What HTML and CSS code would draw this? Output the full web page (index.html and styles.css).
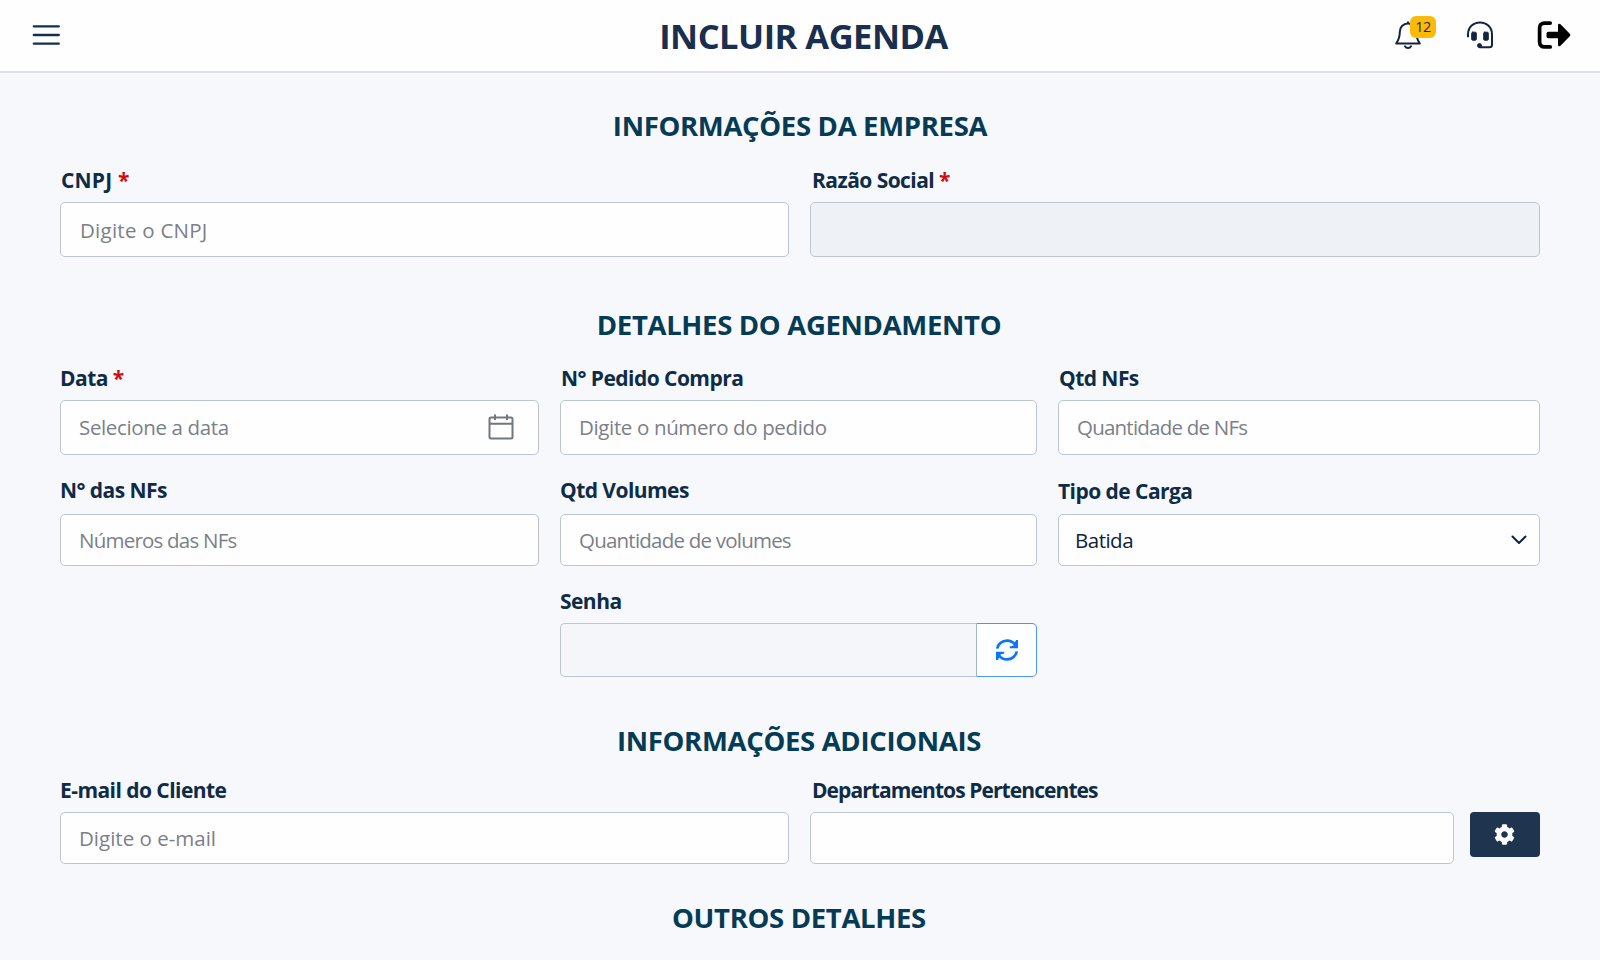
FILE: index.html
```html
<!DOCTYPE html>
<html lang="pt-BR">
  <head>
    <meta charset="UTF-8" />
    <title>Incluir Agenda</title>
    <link rel="stylesheet" href="styles.css">
  </head>
  <body>
    <header class="topbar">
      <button type="button" class="icon-btn menu-btn" aria-label="Menu">
        <svg width="28" height="22" viewBox="0 0 28 22" stroke="currentColor" stroke-width="2.3" stroke-linecap="round">
          <path d="M1.8 2.3h25M1.8 11h25M1.8 19.7h25" />
        </svg>
      </button>
      <h1>INCLUIR AGENDA</h1>
      <div class="actions">
        <button type="button" class="icon-btn bell-btn" aria-label="Notificações">
          <svg width="26" height="28" viewBox="0 0 26 28" fill="none" stroke="currentColor" stroke-width="2" stroke-linejoin="round" stroke-linecap="round">
            <path d="M13 2.6c-5 0-8.2 3.6-8.2 8.4 0 6-1.500 8.500-3.600 11.500h23.600C22.700 19.500 21.200 17 21.200 11c0-4.800-3.200-8.400-8.200-8.400zM13 2.500V1.300" />
            <path d="M10 25.300c.6 1.100 1.700 1.700 3 1.700s2.400-.6 3-1.700" />
          </svg>
          <span class="badge">12</span>
        </button>
        <button type="button" class="icon-btn" aria-label="Suporte">
          <svg width="28" height="28" viewBox="0 0 28 28" fill="none" stroke="currentColor" stroke-width="2" stroke-linecap="round">
            <path d="M2 15.500v-2.300C2 6.500 7.200 1.500 14 1.500s12 5 12 11.700v10.500c0 1.600-1 2.600-2.600 2.600H14" />
            <rect x="5.700" y="11.200" width="4.600" height="8" rx="1" fill="currentColor" stroke-width="1" />
            <rect x="17.700" y="11.200" width="4.600" height="8" rx="1" fill="currentColor" stroke-width="1" />
            <circle cx="13.500" cy="24.600" r="2" fill="currentColor" stroke-width="1" />
          </svg>
        </button>
        <button type="button" class="icon-btn logout-btn" aria-label="Sair">
          <svg width="34" height="28" viewBox="0 0 34 28">
            <path d="M13.200 2.100H7.500c-3 0-4.900 1.900-4.900 4.900v14c0 3 1.900 4.900 4.900 4.900h5.700" fill="none" stroke="currentColor" stroke-width="3.700" stroke-linecap="round" />
            <path d="M11.500 10.800h9.500V4.200c0-1.500 1.500-2 2.500-1l9.300 9.600c.7.700.7 1.700 0 2.400l-9.300 9.600c-1 1-2.500.5-2.500-1v-6.600h-9.500c-1.200 0-2-.8-2-2v-2.400c0-1.200.8-2 2-2z" fill="currentColor" />
          </svg>
        </button>
      </div>
    </header>

    <main>
      <form>
        <h2>INFORMAÇÕES DA EMPRESA</h2>
        <div class="row row-2 row-empresa">
          <div class="field">
            <label for="cnpj" class="label-cnpj">CNPJ <span class="required">*</span></label>
            <input type="text" id="cnpj" class="control" placeholder="Digite o CNPJ" />
          </div>
          <div class="field">
            <label for="razao">Razão Social <span class="required">*</span></label>
            <input type="text" id="razao" class="control" readonly />
          </div>
        </div>

        <h2 class="titulo-detalhes">DETALHES DO AGENDAMENTO</h2>
        <div class="row row-3 row-data">
          <div class="field">
            <label for="data">Data <span class="required">*</span></label>
            <div class="control date-control">
              <input type="text" id="data" placeholder="Selecione a data" />
              <svg width="26" height="26" viewBox="0 0 26 26" fill="none" stroke="currentColor" stroke-width="2">
                <rect x="1.500" y="3.500" width="23" height="21" rx="1.500" />
                <path d="M1.500 9.800h23M7 .5v5.500M19 .5v5.500" />
              </svg>
            </div>
          </div>
          <div class="field">
            <label for="pedido" class="label-pedido">N° Pedido Compra</label>
            <input type="text" id="pedido" class="control" placeholder="Digite o número do pedido" />
          </div>
          <div class="field">
            <label for="qtd_nfs" class="label-pedido">Qtd NFs</label>
            <input type="text" id="qtd_nfs" class="control compact" placeholder="Quantidade de NFs" />
          </div>
        </div>

        <div class="row row-3 row-nfs">
          <div class="field">
            <label for="nfs">N° das NFs</label>
            <input type="text" id="nfs" class="control compact" placeholder="Números das NFs" />
          </div>
          <div class="field">
            <label for="volumes">Qtd Volumes</label>
            <input type="text" id="volumes" class="control compact" placeholder="Quantidade de volumes" />
          </div>
          <div class="field">
            <label for="carga">Tipo de Carga</label>
            <div class="control select-control">
              <select id="carga">
                <option>Batida</option>
                <option>Paletizada</option>
              </select>
              <svg width="16" height="10" viewBox="0 0 16 10" fill="none" stroke="currentColor" stroke-width="2" stroke-linecap="round" stroke-linejoin="round">
                <path d="M1.500 1.500L8 8l6.500-6.500" />
              </svg>
            </div>
          </div>
        </div>

        <div class="row row-3 row-senha">
          <div class="field senha">
            <label for="senha">Senha</label>
            <div class="input-group">
              <input type="text" id="senha" class="control" readonly />
              <button type="button" class="refresh-btn" aria-label="Gerar senha">
                <svg width="24" height="24" viewBox="0 0 24 24">
                  <path d="M2.200 10.600C3 6 7 2.600 12 2.600c3.500 0 6.300 1.500 8.200 4.200M21.800 13.400c-.8 4.600-4.800 8-9.800 8-3.500 0-6.300-1.500-8.200-4.200" fill="none" stroke="currentColor" stroke-width="2.600" />
                  <path d="M23 2v8.300h-8.200V8.500l3.700-1L21 2zM1 22v-8.300h8.200v1.800l-3.700 1L3 22z" fill="currentColor" />
                </svg>
              </button>
            </div>
          </div>
        </div>

        <h2 class="titulo-adicionais">INFORMAÇÕES ADICIONAIS</h2>
        <div class="row row-2 row-adicionais">
          <div class="field">
            <label for="email">E-mail do Cliente</label>
            <input type="email" id="email" class="control" placeholder="Digite o e-mail" />
          </div>
          <div class="field">
            <label for="departamentos" class="label-departamentos">Departamentos Pertencentes</label>
            <div class="with-button">
              <input type="text" id="departamentos" class="control" />
              <button type="button" class="config-btn" aria-label="Configurar">
                <svg width="21" height="21" viewBox="0 0 512 512" fill="currentColor">
                  <path d="M487.400 315.700l-42.600-24.600c4.300-23.200 4.300-47 0-70.200l42.600-24.600c4.900-2.800 7.100-8.600 5.500-14-11.100-35.600-30-67.800-54.700-94.600-3.800-4.100-10-5.100-14.800-2.300L380.800 110c-17.900-15.400-38.500-27.300-60.800-35.100V25.800c0-5.600-3.900-10.500-9.400-11.700-36.700-8.200-74.300-7.800-109.200 0-5.500 1.200-9.400 6.100-9.400 11.700V75c-22.200 7.900-42.800 19.800-60.800 35.100L88.700 85.500c-4.900-2.800-11-1.900-14.800 2.300-24.700 26.700-43.600 58.900-54.700 94.600-1.700 5.400.6 11.200 5.500 14L67.300 221c-4.300 23.200-4.300 47 0 70.200l-42.600 24.600c-4.900 2.800-7.100 8.600-5.500 14 11.100 35.600 30 67.800 54.700 94.600 3.800 4.100 10 5.100 14.800 2.300l42.600-24.600c17.900 15.400 38.500 27.300 60.800 35.100v49.200c0 5.600 3.900 10.500 9.400 11.700 36.700 8.200 74.300 7.800 109.200 0 5.500-1.200 9.400-6.100 9.400-11.700v-49.200c22.200-7.900 42.800-19.800 60.800-35.100l42.600 24.600c4.900 2.800 11 1.900 14.800-2.300 24.700-26.700 43.600-58.900 54.700-94.600 1.500-5.500-.7-11.300-5.600-14.100zM256 336c-44.100 0-80-35.900-80-80s35.900-80 80-80 80 35.900 80 80-35.900 80-80 80z" />
                </svg>
              </button>
            </div>
          </div>
        </div>

        <h2 class="titulo-outros">OUTROS DETALHES</h2>
      </form>
    </main>
  </body>
</html>
```
FILE: styles.css
```css
* {
  box-sizing: border-box;
}

body {
  font-family: "Segoe UI", "Open Sans", sans-serif;
  margin: 0;
  height: 960px;
  overflow: hidden;
  background-color: #f6f8fb;
  color: #0f2c47;
}

button,
input,
select {
  font-family: inherit;
  margin: 0;
}

/* Barra superior */
.topbar {
  display: grid;
  grid-template-columns: 1fr auto 1fr;
  align-items: center;
  height: 73px;
  padding: 0 29px 2px 32px;
  background-color: #fefefe;
  border-bottom: 2px solid #dddfea;
}

.topbar h1 {
  margin: 2px 0 0 4px;
  font-size: 34.5px;
  line-height: 44px;
  font-weight: 700;
  letter-spacing: -0.5px;
  color: #192f4d;
}

.icon-btn {
  display: flex;
  padding: 0;
  border: none;
  background: none;
  color: #14233f;
  cursor: pointer;
}

.menu-btn {
  color: #10304f;
}

.actions {
  display: flex;
  justify-content: flex-end;
  align-items: center;
  gap: 43px;
}

.bell-btn {
  position: relative;
  margin-right: 2px;
}

.logout-btn {
  color: #000;
}

.badge {
  position: absolute;
  top: -5px;
  left: 15px;
  width: 26px;
  height: 22px;
  border-radius: 6px;
  background-color: #fbba0b;
  color: #2c2a20;
  font-size: 14.5px;
  line-height: 22px;
  letter-spacing: -0.5px;
  text-align: center;
}

/* Formulário */
main {
  padding: 35px 60px 0;
}

h2 {
  margin: 0;
  font-size: 27.5px;
  line-height: 36px;
  font-weight: 700;
  letter-spacing: -0.32px;
  text-align: center;
  color: #063b55;
}

.titulo-detalhes {
  margin-top: 50px;
}

.titulo-adicionais {
  margin-top: 46px;
}

.titulo-outros {
  margin-top: 36px;
}

.titulo-detalhes,
.titulo-adicionais,
.titulo-outros {
  padding-right: 2px;
}

.row {
  display: grid;
}

.row-2 {
  grid-template-columns: 729px 730px;
  gap: 21px;
}

.row-3 {
  grid-template-columns: 479px 477px 482px;
  gap: 21px;
}

.field {
  display: flex;
  flex-direction: column;
}

label {
  margin-bottom: 10px;
  font-size: 21px;
  line-height: 24px;
  font-weight: 700;
  letter-spacing: -0.55px;
}

.row-2 .field + .field label {
  padding-left: 2px;
}

.label-cnpj {
  padding-left: 1px;
  letter-spacing: 0.2px;
}

.label-pedido {
  padding-left: 1px;
}

.label-departamentos {
  letter-spacing: -0.92px;
}

.required {
  color: #cd0b10;
}

.control {
  width: 100%;
  height: 52px;
  padding: 0 18px;
  border: 1px solid #bcc5d1;
  border-radius: 5px;
  background-color: #fefefe;
  font-size: 20.5px;
  color: #0d2240;
  outline: none;
}

::placeholder {
  color: #7b7f89;
  opacity: 1;
}

.control[readonly] {
  background-color: #eef1f5;
}

.row-empresa {
  margin-top: 24px;
}

.row-empresa .control {
  height: 55px;
  padding: 0 19px;
  letter-spacing: 0.25px;
}

.row-data {
  margin-top: 23px;
}

.row-data .control {
  height: 55px;
  padding-bottom: 2px;
  letter-spacing: -0.36px;
}

.row .control.compact {
  letter-spacing: -0.78px;
}

.row-nfs {
  margin-top: 23px;
}

.row-nfs label {
  margin-bottom: 12px;
}

.row-nfs .field:last-child label {
  padding-top: 1px;
  margin-bottom: 11px;
}

.row-senha {
  margin-top: 23px;
}

.senha {
  grid-column: 2;
}

.row-adicionais {
  margin-top: 19px;
}

.date-control,
.select-control {
  display: flex;
  align-items: center;
}

.date-control input,
.select-control select {
  flex: 1;
  min-width: 0;
  padding: 0;
  border: none;
  background: none;
  outline: none;
  appearance: none;
  font-size: inherit;
  letter-spacing: inherit;
  color: inherit;
}

.date-control {
  padding-right: 24px;
}

.date-control svg {
  color: #717680;
}

.select-control {
  padding: 0 12px 0 16px;
  letter-spacing: -0.5px;
}

.input-group {
  display: flex;
}

.input-group .control {
  flex: 1;
  min-width: 0;
  height: 54px;
  border-right: none;
  border-radius: 5px 0 0 5px;
  background-color: #f4f6f9;
}

.refresh-btn {
  display: flex;
  align-items: center;
  justify-content: center;
  width: 61px;
  height: 54px;
  padding: 0;
  border: 1px solid #4c96fb;
  border-left-color: #a3b4cf;
  border-radius: 0 5px 5px 0;
  background-color: #fdfeff;
  color: #0a74fb;
  cursor: pointer;
}

.with-button {
  display: flex;
  align-items: flex-start;
  gap: 16px;
}

.with-button .control {
  flex: 1;
  min-width: 0;
}

.config-btn {
  display: flex;
  align-items: center;
  justify-content: center;
  width: 70px;
  height: 45px;
  padding: 0 1px 1px 0;
  border: none;
  border-radius: 4px;
  background-color: #1f344f;
  color: #fff;
  cursor: pointer;
}
```
